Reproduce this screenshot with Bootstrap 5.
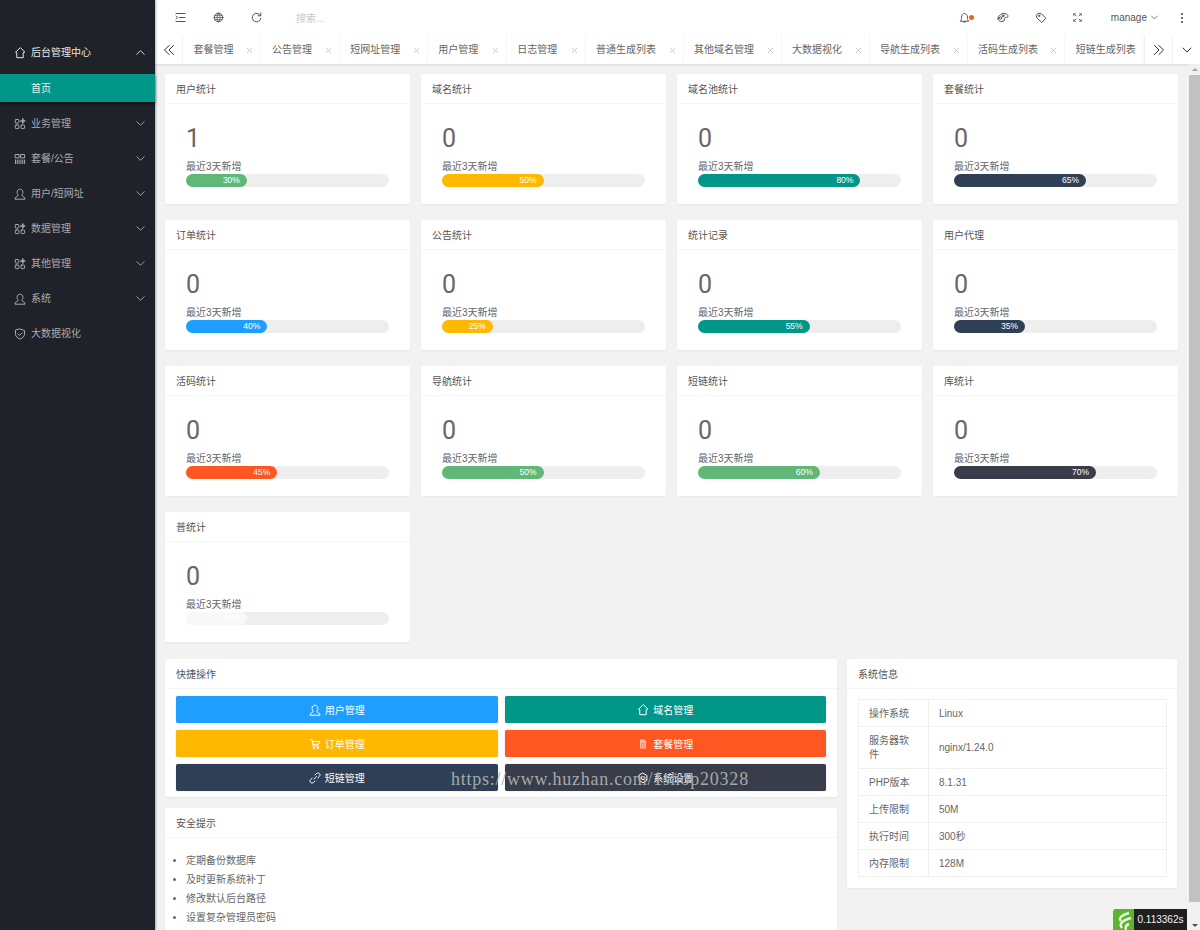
<!DOCTYPE html>
<html lang="zh-CN">
<head>
    <meta charset="UTF-8">
    <meta name="viewport" content="width=device-width, initial-scale=1.0">
    <title>后台管理中心</title>
    <link href="https://cdn.jsdelivr.net/npm/bootstrap@5.3.0/dist/css/bootstrap.min.css" rel="stylesheet">
    <style>
        html, body { height: 930px; overflow: hidden; }
        body {
            font-family: "Liberation Sans", "Noto Sans CJK SC", sans-serif;
            font-size: 10px;
            line-height: 1.5;
            color: #666;
            background: #f2f2f2;
        }
        .ico { fill: none; stroke: currentColor; stroke-width: 1; stroke-linecap: round; stroke-linejoin: round; flex: none; }

        .side-bar { width: 155px; height: 930px; background: #20222a; color: #a9aaae; flex: none; padding-top: 35px; box-shadow: 1px 0 2px rgba(0,0,0,.3); z-index: 2; }
        .side-item { height: 35px; padding: 0 9px 0 14px; gap: 5px; }
        .side-item.top-open { color: #e6e6e7; }
        .side-sub { height: 28px; background: #009688; color: #e8f5f3; padding-left: 31px; line-height: 29px; box-shadow: 0 2px 3px rgba(0,0,0,.5); margin: 4px 0; }
        .side-chev { margin-left: auto; }

        .main-col { width: 1045px; height: 930px; flex: none; }
        .top-bar { height: 35px; background: #fff; color: #555; flex: none; padding: 0 17px 0 20px; }
        .top-icon { width: 38px; }
        .search-hint { color: #c9c9c9; margin-left: 7px; margin-top: 1px; }
        .alert-dot { width: 5px; height: 5px; left: 10px; top: 3px; }
        .manage-name { gap: 3px; }
        .more-dots { gap: 2px; width: 3px; margin-left: 21px; }
        .more-dots i { width: 2px; height: 2px; }
        .tab-strip { height: 29px; background: #fff; flex: none; box-shadow: 0 1px 2px rgba(0,0,0,.1); color: #666; }
        .tab-btn { width: 28px; height: 100%; flex: none; color: #333; }
        .tab-btn.edge-r { border-right: 1px solid #f2f2f2; }
        .tab-btn.edge-l { border-left: 1px solid #f2f2f2; }
        .tab-one { height: 100%; flex: none; padding-left: 10.5px; border-right: 1px solid #f6f6f6; white-space: nowrap; }
        .tab-x { margin-left: auto; margin-right: 7px; color: #c2c2c2; margin-top: 1px; }

        .body-wrap { flex: 1; min-height: 0; overflow: hidden; }
        .page-scroll { flex: 1; min-width: 0; padding: 10px 11px 0 10px; overflow: hidden; }
        .fake-bar { width: 11px; background: #f1f1f1; flex: none; position: relative; }
        .fake-thumb { position: absolute; left: 0; right: 0; top: 11px; height: 827px; background: #c1c1c1; }
        .fake-up { position: absolute; top: 4px; left: 3px; border: 3px solid transparent; border-bottom: 3px solid #a3a3a3; border-top: 0; }
        .fake-down { position: absolute; bottom: 3px; left: 3px; border: 3px solid transparent; border-top: 3px solid #505050; border-bottom: 0; }

        .stat-grid { display: grid; grid-template-columns: repeat(4, 245px); column-gap: 11px; row-gap: 16px; }
        .pane { background: #fff; border-radius: 2px; box-shadow: 0 1px 2px rgba(0,0,0,.05); }
        .pane-head { height: 30px; line-height: 31px; padding: 0 11px; border-bottom: 1px solid #f6f6f6; color: #555; }
        .stat-pane { height: 130px; }
        .stat-body { padding: 17px 21px 0; }
        .stat-num { font-family: Roboto, "Liberation Sans", sans-serif; font-size: 25px; line-height: 36px; color: #666; height: 31px; }
        .stat-label { line-height: 14px; margin: 8px 0 0; color: #666; }
        .stat-track { height: 13px; border-radius: 7px; background: #eee; }
        .stat-fill { border-radius: 7px; color: #fff; font-size: 8.5px; line-height: 13px; text-align: right; padding-right: 7px; display: block; overflow: hidden; }

        .low-row { margin-top: 17px; gap: 10px; align-items: flex-start; }
        .low-left { width: 672px; flex: none; }
        .low-right { width: 330px; flex: none; }
        .act-body { padding: 7px 11px 6px; display: grid; grid-template-columns: 1fr 1fr; gap: 7px; }
        .act-btn { height: 27px; border: 0; border-radius: 2px; color: #fff; font-size: 10px; padding: 1px 0 0; gap: 4px; box-shadow: 0 0 1px rgba(0,0,0,.4); }
        .act-btn:hover { color: #fff; }
        .bg-a { background: #1e9fff; }
        .bg-b { background: #009688; }
        .bg-c { background: #ffb800; }
        .bg-d { background: #ff5722; }
        .bg-e { background: #2f4056; }
        .bg-f { background: #393d49; }
        .bg-g { background: #5fb878; }
        .bg-h { background: #f8f8f8; color: #fff; }
        .tip-pane { margin-top: 11px; height: 160px; }
        .tip-list { padding: 12.5px 0 0 21px; margin: 0; line-height: 19.2px; color: #666; list-style: disc; }
        .info-wrap { padding: 10px 10px 11px 11px; }
        .info-table { margin: 0; font-size: 10px; color: #666; table-layout: fixed; --bs-table-color: #666; --bs-table-border-color: #f0f0f0; }
        .info-table td { padding: 7px 10px 5px; line-height: 14.2px; vertical-align: middle; border-color: #f0f0f0; }
        .info-table td:first-child { width: 70px; padding-left: 10px; padding-right: 12px; }
        .timer-box { position: absolute; right: 13px; bottom: 0; height: 21px; z-index: 5; }
        .timer-logo { width: 21px; height: 21px; background: #5cb531; border-top-left-radius: 3px; overflow: hidden; }
        .timer-val { background: #1f1f1f; color: #f2f2f2; width: 53px; font-size: 10px; line-height: 21px; text-align: center; }
        .water-mark { position: absolute; left: 451px; top: 768px; font-family: "Liberation Serif", serif; font-size: 18px; line-height: 22px; letter-spacing: .76px; color: #a8a8a8; white-space: nowrap; z-index: 6; }
    </style>
</head>
<body class="position-relative">
<svg width="0" height="0" class="position-absolute">
    <defs>
        <symbol id="i-home" viewBox="0 0 12 12"><path d="M6 1 1.500 5.200 2.800 5.700V10.700H9.200V5.700L10.500 5.200Z"/></symbol>
        <symbol id="i-apps" viewBox="0 0 12 12"><rect x="1.300" y="1.500" width="3.600" height="3.600" rx=".8"/><rect x="1.300" y="7" width="3.600" height="3.600" rx=".8"/><rect x="7" y="7" width="3.600" height="3.600" rx=".8"/><path d="M8.800 1v4M6.800 3h4" stroke-width="1.600"/></symbol>
        <symbol id="i-grid" viewBox="0 0 12 12"><rect x="1.500" y="1.500" width="3.600" height="3.400"/><rect x="7" y="1.500" width="3.600" height="3.400"/><path d="M1.500 7v3.600M3.300 7v3.600M5.100 7v3.600M7 7v3.600M8.800 7v3.600M10.600 7v3.600"/></symbol>
        <symbol id="i-user" viewBox="0 0 12 12"><path d="M1 10.800c0-1.900 2-2.100 2.900-2.900.4-.5.2-1-.2-1.500C3 5.500 3 4 3.300 3 3.800 1.700 5 1.200 6 1.200s2.300.5 2.700 1.800c.3 1 .3 2.500-.4 3.400-.4.5-.6 1-.2 1.500.9.800 2.900 1 2.900 2.900Z"/></symbol>
        <symbol id="i-shield" viewBox="0 0 12 12"><path d="M6 1 10.500 2.500V6c0 2.600-2.300 4.300-4.500 5-2.200-.7-4.500-2.400-4.500-5V2.500Z"/><path d="M3.900 5.900 5.500 7.400 8.200 4.700"/></symbol>
        <symbol id="i-down" viewBox="0 0 12 12"><path d="M2 4 6 8 10 4"/></symbol>
        <symbol id="i-up" viewBox="0 0 12 12"><path d="M2 8 6 4 10 8"/></symbol>
        <symbol id="i-x" viewBox="0 0 8 8"><path d="M1.500 1.500 6.500 6.500M6.500 1.500 1.500 6.500"/></symbol>
    </defs>
</svg>

<div class="d-flex">
    <!-- Sidebar -->
    <nav class="side-bar d-flex flex-column">
        <div class="side-item top-open d-flex align-items-center">
            <svg class="ico" width="12" height="12"><use href="#i-home"/></svg><span>后台管理中心</span>
            <svg class="ico side-chev" width="11" height="11"><use href="#i-up"/></svg>
        </div>
        <div class="side-sub">首页</div>
        <div class="side-item d-flex align-items-center">
            <svg class="ico" width="12" height="12"><use href="#i-apps"/></svg><span>业务管理</span>
            <svg class="ico side-chev" width="11" height="11"><use href="#i-down"/></svg>
        </div>
        <div class="side-item d-flex align-items-center">
            <svg class="ico" width="12" height="12"><use href="#i-grid"/></svg><span>套餐/公告</span>
            <svg class="ico side-chev" width="11" height="11"><use href="#i-down"/></svg>
        </div>
        <div class="side-item d-flex align-items-center">
            <svg class="ico" width="12" height="12"><use href="#i-user"/></svg><span>用户/短网址</span>
            <svg class="ico side-chev" width="11" height="11"><use href="#i-down"/></svg>
        </div>
        <div class="side-item d-flex align-items-center">
            <svg class="ico" width="12" height="12"><use href="#i-apps"/></svg><span>数据管理</span>
            <svg class="ico side-chev" width="11" height="11"><use href="#i-down"/></svg>
        </div>
        <div class="side-item d-flex align-items-center">
            <svg class="ico" width="12" height="12"><use href="#i-apps"/></svg><span>其他管理</span>
            <svg class="ico side-chev" width="11" height="11"><use href="#i-down"/></svg>
        </div>
        <div class="side-item d-flex align-items-center">
            <svg class="ico" width="12" height="12"><use href="#i-user"/></svg><span>系统</span>
            <svg class="ico side-chev" width="11" height="11"><use href="#i-down"/></svg>
        </div>
        <div class="side-item d-flex align-items-center">
            <svg class="ico" width="12" height="12"><use href="#i-shield"/></svg><span>大数据视化</span>
        </div>
    </nav>

    <div class="main-col d-flex flex-column">
        <!-- Header -->
        <header class="top-bar d-flex align-items-center">
            <span class="top-icon d-flex"><svg class="ico" width="11" height="11" viewBox="0 0 11 11"><path d="M1 1.500H10M4.500 5.500H10M1 9.500H10M1 4 2.800 5.500 1 7"/></svg></span>
            <span class="top-icon d-flex"><svg class="ico" width="11" height="11" viewBox="0 0 11 11"><circle cx="5.500" cy="5.500" r="4.300"/><path d="M1.200 5.500H9.800M1.800 3.300H9.200M1.800 7.700H9.200M5.500 1.200C3.500 3.500 3.500 7.500 5.500 9.800 7.500 7.500 7.500 3.500 5.500 1.200Z" stroke-width=".8"/></svg></span>
            <span class="top-icon d-flex"><svg class="ico" width="11" height="11" viewBox="0 0 11 11" stroke-width="1.400"><path d="M9.300 3.500A4.300 4.300 0 1 0 9.800 6.300"/><path d="M9.800 1V3.800H7" /></svg></span>
            <span class="search-hint">搜索...</span>
            <div class="ms-auto d-flex align-items-center">
                <span class="position-relative d-flex top-icon"><svg class="ico" width="11" height="12" viewBox="0 0 11 12" stroke-width=".9"><path d="M1.500 9C2.500 8 2.500 7 2.500 5.200 2.500 3 4 1.500 5.500 1.500S8.500 3 8.500 5.200C8.500 7 8.500 8 9.500 9ZM4.500 9.500C4.500 11 6.500 11 6.500 9.500"/></svg><span class="rounded-circle bg-d position-absolute alert-dot"></span></span>
                <span class="d-flex top-icon"><svg class="ico" width="12" height="11" viewBox="0 0 12 11" stroke-width=".9"><path d="M1 7C.8 3.500 4 1.500 7 1.500 9.500 1.500 11.200 3 11 4.800 10.500 6 8.500 4.800 7.500 6 6.800 7 8 8.300 7 9 4.500 10 1.500 9.500 1 7Z"/><circle cx="3.500" cy="6" r="1.200"/><circle cx="6" cy="3.800" r="1"/></svg></span>
                <span class="d-flex top-icon"><svg class="ico" width="12" height="12" viewBox="0 0 12 12" stroke-width=".9"><path d="M1.500 3.200 3.200 1.200 6.500 1.800 10.800 6.200 6.700 10.500 2 6Z"/><circle cx="4" cy="3.800" r=".8"/></svg></span>
                <span class="d-flex top-icon"><svg class="ico" width="9" height="9" viewBox="0 0 9 9"><path d="M.8 .8 3 3M.8 2.500V.8H2.500M8.200 .8 6 3M6.500 .8H8.200V2.500M8.200 8.200 6 6M8.200 6.500V8.200H6.500M.8 8.200 3 6M2.500 8.200H.8V6.500" stroke-width=".8"/></svg></span>
                <span class="d-flex align-items-center manage-name">manage <svg class="ico" width="9" height="9"><use href="#i-down"/></svg></span>
                <span class="d-flex flex-column align-items-center more-dots"><i class="rounded-circle bg-f d-block"></i><i class="rounded-circle bg-f d-block"></i><i class="rounded-circle bg-f d-block"></i></span>
            </div>
        </header>

        <!-- Tabs -->
        <div class="tab-strip d-flex align-items-center">
            <span class="tab-btn edge-r d-flex align-items-center justify-content-center"><svg class="ico" width="12" height="12" viewBox="0 0 12 12" stroke-width="1.200"><path d="M6 1.500 1.500 6 6 10.500M10.500 1.500 6 6 10.500 10.500"/></svg></span>
            <div id="tabList" class="d-flex align-items-center h-100 overflow-hidden flex-grow-1"></div>
            <span class="tab-btn edge-l d-flex align-items-center justify-content-center"><svg class="ico" width="12" height="12" viewBox="0 0 12 12" stroke-width="1.200"><path d="M6 1.500 10.500 6 6 10.500M1.500 1.500 6 6 1.500 10.500"/></svg></span>
            <span class="tab-btn edge-l d-flex align-items-center justify-content-center"><svg class="ico" width="12" height="12"><use href="#i-down"/></svg></span>
        </div>

        <div class="body-wrap d-flex">
            <div class="page-scroll">
                <div id="statGrid" class="stat-grid"></div>

                <div class="low-row d-flex">
                    <div class="low-left">
                        <div class="pane">
                            <div class="pane-head">快捷操作</div>
                            <div class="act-body">
                                <a class="btn act-btn bg-a d-flex align-items-center justify-content-center"><svg class="ico" width="12" height="12" stroke-width=".9"><use href="#i-user"/></svg>用户管理</a>
                                <a class="btn act-btn bg-b d-flex align-items-center justify-content-center"><svg class="ico" width="12" height="12" stroke-width=".9"><use href="#i-home"/></svg>域名管理</a>
                                <a class="btn act-btn bg-c d-flex align-items-center justify-content-center"><svg class="ico" width="12" height="12" viewBox="0 0 12 12" stroke-width=".9"><path d="M1 1.500H2.800L4.300 8H9.500M3.200 3.500H10.500L9.500 6.300H3.900"/><circle cx="4.800" cy="10" r=".7"/><circle cx="8.800" cy="10" r=".7"/></svg>订单管理</a>
                                <a class="btn act-btn bg-d d-flex align-items-center justify-content-center"><svg width="12" height="12" viewBox="0 0 12 12" fill="rgba(255,255,255,.6)"><path d="M3 1.500H7.300L9 3.200V10.500H3Z"/><path d="M4.200 5.200H7.800M4.200 7H7.800M4.200 8.800H7.800" stroke="#ff5722" stroke-width=".6"/></svg>套餐管理</a>
                                <a class="btn act-btn bg-e d-flex align-items-center justify-content-center"><svg class="ico" width="12" height="12" viewBox="0 0 12 12" stroke-width="1.600"><path d="M5 7 7.500 4.500M6 3 7.500 1.500C8.500.7 10 .9 10.700 1.800 11.300 2.700 11 3.800 10.300 4.500L8.800 6M6 9 4.500 10.500C3.500 11.300 2 11.100 1.300 10.200.7 9.300 1 8.200 1.700 7.500L3.200 6"/></svg>短链管理</a>
                                <a class="btn act-btn bg-f d-flex align-items-center justify-content-center"><svg class="ico" width="12" height="12" viewBox="0 0 12 12"><circle cx="6" cy="6" r="1.700"/><path d="M6 1.200 9.900 3.500V8.500L6 10.800 2.100 8.500V3.500Z"/></svg>系统设置</a>
                            </div>
                        </div>
                        <div class="pane tip-pane">
                            <div class="pane-head">安全提示</div>
                            <ul class="tip-list">
                                <li>定期备份数据库</li>
                                <li>及时更新系统补丁</li>
                                <li>修改默认后台路径</li>
                                <li>设置复杂管理员密码</li>
                            </ul>
                        </div>
                    </div>
                    <div class="low-right pane">
                        <div class="pane-head">系统信息</div>
                        <div class="info-wrap">
                            <table class="table table-bordered info-table">
                                <tbody>
                                    <tr><td>操作系统</td><td>Linux</td></tr>
                                    <tr><td>服务器软件</td><td>nginx/1.24.0</td></tr>
                                    <tr><td>PHP版本</td><td>8.1.31</td></tr>
                                    <tr><td>上传限制</td><td>50M</td></tr>
                                    <tr><td>执行时间</td><td>300秒</td></tr>
                                    <tr><td>内存限制</td><td>128M</td></tr>
                                </tbody>
                            </table>
                        </div>
                    </div>
                </div>
            </div>
            <div class="fake-bar"><span class="fake-up"></span><span class="fake-thumb"></span><span class="fake-down"></span></div>
        </div>
    </div>
</div>

<div class="timer-box d-flex">
    <span class="timer-logo d-flex"><svg width="21" height="21" viewBox="0 0 21 21" fill="none" stroke="#e8f5e0" stroke-width="2.400"><path d="M16 4C9 6 5 9 8 12M18 9C11 11 5 14 9 19M16 15C13 16 12 18 13 21"/></svg></span>
    <span class="timer-val">0.113362s</span>
</div>
<div class="water-mark">https://www.huzhan.com/1shop20328</div>

<script>
    const tabs = ['套餐管理', '公告管理', '短网址管理', '用户管理', '日志管理', '普通生成列表', '其他域名管理', '大数据视化', '导航生成列表', '活码生成列表', '短链生成列表'];
    const tabWidths = [78.4, 78.4, 88, 79, 78.8, 98, 98, 88, 98, 97.7, 0];

    const stats = [
        ['用户统计', 1, 30, 'bg-g'], ['域名统计', 0, 50, 'bg-c'], ['域名池统计', 0, 80, 'bg-b'], ['套餐统计', 0, 65, 'bg-e'],
        ['订单统计', 0, 40, 'bg-a'], ['公告统计', 0, 25, 'bg-c'], ['统计记录', 0, 55, 'bg-b'], ['用户代理', 0, 35, 'bg-e'],
        ['活码统计', 0, 45, 'bg-d'], ['导航统计', 0, 50, 'bg-g'], ['短链统计', 0, 60, 'bg-g'], ['库统计', 0, 70, 'bg-f'],
        ['普统计', 0, 30, 'bg-h']
    ];

    const tabList = document.getElementById('tabList');
    tabs.forEach((name, i) => {
        const el = document.createElement('div');
        el.className = 'tab-one d-flex align-items-center';
        if (tabWidths[i]) {
            el.style.width = tabWidths[i] + 'px';
            el.innerHTML = `<span>${name}</span><svg class="ico tab-x" width="7" height="7" viewBox="0 0 8 8"><use href="#i-x"/></svg>`;
        } else {
            el.style.width = '78px';
            el.innerHTML = `<span>${name}</span>`;
        }
        tabList.appendChild(el);
    });

    const statGrid = document.getElementById('statGrid');
    stats.forEach(s => {
        const card = document.createElement('div');
        card.className = 'pane stat-pane';
        card.innerHTML = `
            <div class="pane-head">${s[0]}</div>
            <div class="stat-body">
                <div class="stat-num">${s[1]}</div>
                <div class="stat-label">最近3天新增</div>
                <div class="stat-track"><span class="stat-fill ${s[3]}" style="width:${s[2]}%">${s[2]}%</span></div>
            </div>`;
        statGrid.appendChild(card);
    });
</script>
<script src="https://cdn.jsdelivr.net/npm/bootstrap@5.3.0/dist/js/bootstrap.bundle.min.js"></script>
</body>
</html>
